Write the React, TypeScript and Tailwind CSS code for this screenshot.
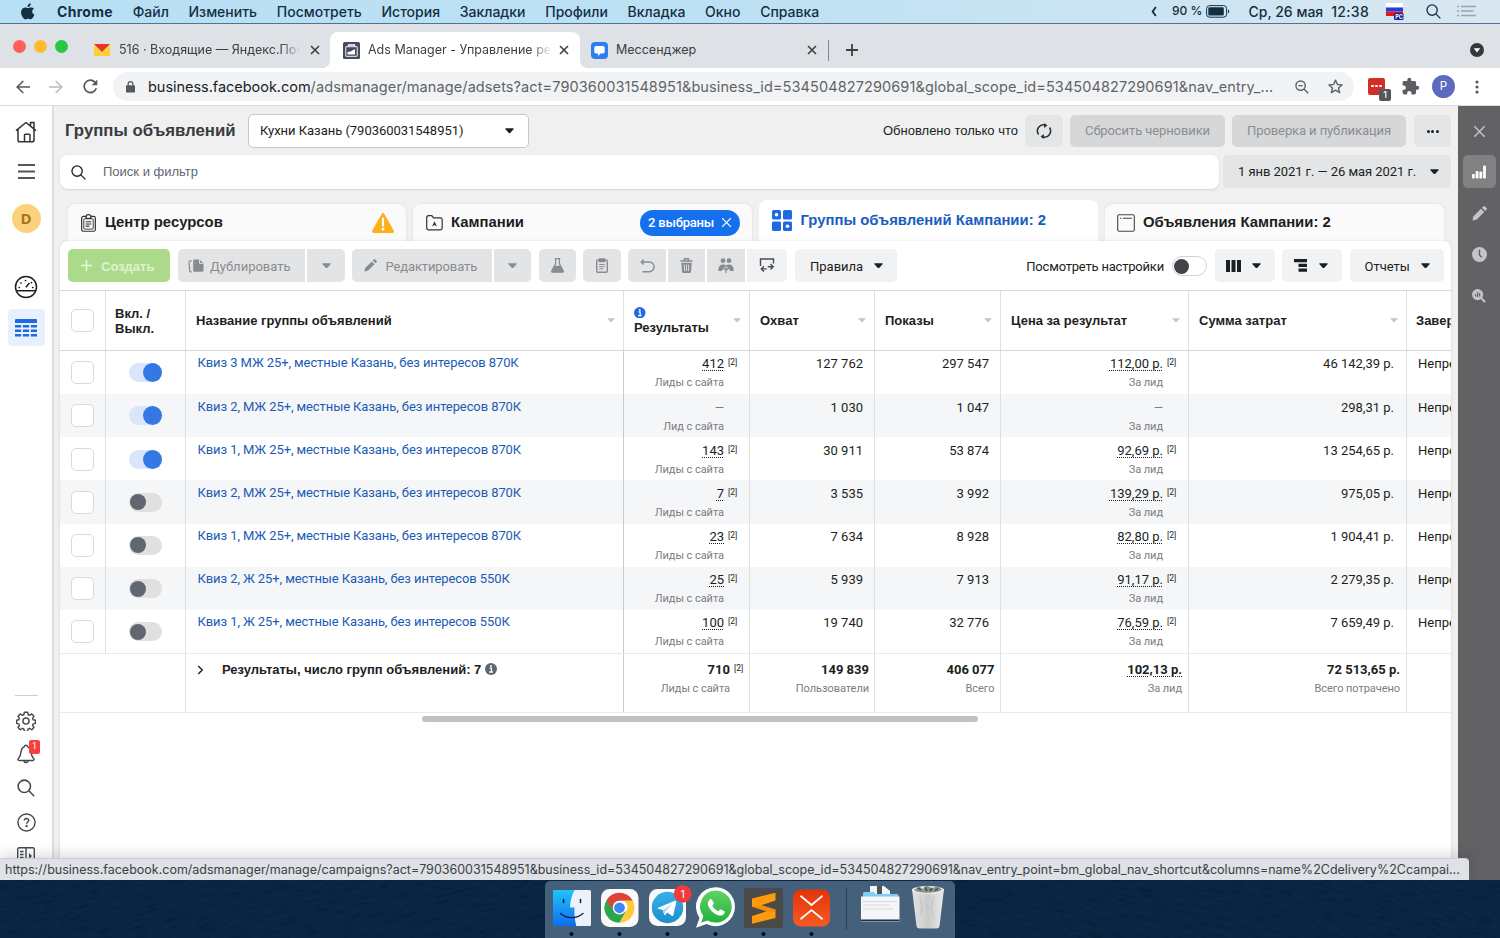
import type { ReactNode } from "react";
import clsx from "clsx";

const INTER = "font-['Inter',sans-serif]";
const ROBOTO = "font-['Roboto',sans-serif]";
const ARIAL = "font-['Liberation_Sans',sans-serif]";

type AdSet = {
  name: string;
  on: boolean;
  results: string | null;
  unit: string;
  reach: string;
  shows: string;
  price: string | null;
  spent: string;
};

const ADSETS: AdSet[] = [
  { name: "Квиз 3 МЖ 25+, местные Казань, без интересов 870К", on: true, results: "412", unit: "Лиды с сайта", reach: "127 762", shows: "297 547", price: "112,00 р.", spent: "46 142,39 р." },
  { name: "Квиз 2, МЖ 25+, местные Казань, без интересов 870К", on: true, results: null, unit: "Лид с сайта", reach: "1 030", shows: "1 047", price: null, spent: "298,31 р." },
  { name: "Квиз 1, МЖ 25+, местные Казань, без интересов 870К", on: true, results: "143", unit: "Лиды с сайта", reach: "30 911", shows: "53 874", price: "92,69 р.", spent: "13 254,65 р." },
  { name: "Квиз 2, МЖ 25+, местные Казань, без интересов 870К", on: false, results: "7", unit: "Лиды с сайта", reach: "3 535", shows: "3 992", price: "139,29 р.", spent: "975,05 р." },
  { name: "Квиз 1, МЖ 25+, местные Казань, без интересов 870К", on: false, results: "23", unit: "Лиды с сайта", reach: "7 634", shows: "8 928", price: "82,80 р.", spent: "1 904,41 р." },
  { name: "Квиз 2, Ж 25+, местные Казань, без интересов 550К", on: false, results: "25", unit: "Лиды с сайта", reach: "5 939", shows: "7 913", price: "91,17 р.", spent: "2 279,35 р." },
  { name: "Квиз 1, Ж 25+, местные Казань, без интересов 550К", on: false, results: "100", unit: "Лиды с сайта", reach: "19 740", shows: "32 776", price: "76,59 р.", spent: "7 659,49 р." },
];

const MENU = ["Файл", "Изменить", "Посмотреть", "История", "Закладки", "Профили", "Вкладка", "Окно", "Справка"];

const GRID = "grid grid-cols-[46px_80px_438px_126px_125px_126px_188px_218px_44px]";

function Caret({ className = "h-[5.500px] w-[9px]" }: { className?: string }) {
  return (
    <svg viewBox="0 0 10 6" className={clsx("shrink-0", className)} fill="currentColor">
      <path d="M1 .2h8c.7 0 1 .7.5 1.200L5.700 5.400a1 1 0 0 1-1.400 0L.5 1.400C0 .9.3.2 1 .2z" />
    </svg>
  );
}

function Close({ className }: { className?: string }) {
  return (
    <svg viewBox="0 0 10 10" className={className} fill="none" stroke="currentColor">
      <path d="M1 1l8 8M9 1l-8 8" />
    </svg>
  );
}

function Magnifier({ className, width = 1.5 }: { className?: string; width?: number }) {
  return (
    <svg viewBox="0 0 16 16" className={className} fill="none" stroke="currentColor" strokeWidth={width}>
      <circle cx="6.500" cy="6.500" r="5.500" />
      <path d="M10.500 10.500L15.300 15.300" />
    </svg>
  );
}

function MenuBar() {
  return (
    <div className={clsx("flex h-[24px] shrink-0 items-center border-b border-[#4d7396] bg-linear-to-r from-[#b9dff5] via-[#bde1f3] to-[#d9e7f0] pb-px text-[14px] font-medium text-[#123042]", INTER)}>
      <svg viewBox="0 0 14 17" className="ml-[21px] h-[17px] w-[14px]" fill="#12303f">
        <path d="M9.800.2c.1 1.100-.3 2-.9 2.700-.6.7-1.500 1.200-2.400 1.100-.1-1 .4-2 .9-2.600C8 .7 9 .3 9.800.2zM12.900 5.800c-1 .6-1.700 1.500-1.700 2.800 0 1.500.9 2.600 2.200 3.100-.3.9-.8 1.800-1.300 2.600-.7 1-1.400 2-2.500 2-1.100 0-1.400-.6-2.600-.6-1.200 0-1.600.6-2.600.7-1.100 0-1.900-1.100-2.600-2.100C.4 12.300-.700 8.800.8 6.500c.8-1.200 2-2 3.400-2 1.100 0 2.100.7 2.700.7.600 0 1.900-.9 3.200-.7 1.100 0 2.100.5 2.800 1.300z" />
      </svg>
      <div className="ml-[22px] flex gap-[19.700px]">
        <span className="font-bold tracking-[.3px]">Chrome</span>
        {MENU.map((item) => (
          <span key={item}>{item}</span>
        ))}
      </div>
      <div className="ml-auto flex items-center">
        <svg viewBox="0 0 6 12" className="h-[11px] w-[6px]" fill="none" stroke="currentColor" strokeWidth="2">
          <path d="M5 1L1.500 6 5 11" />
        </svg>
        <span className="ml-[15px] text-[12px]">90 %</span>
        <svg viewBox="0 0 24 13" className="ml-[4px] h-[13px] w-[24px]">
          <rect x=".6" y=".6" width="20" height="11.600" rx="3" fill="none" stroke="#123042" />
          <rect x="2.300" y="2.300" width="15.500" height="8.200" rx="1.200" fill="#123042" />
          <path d="M22 4.500c1.700.6 1.700 3.200 0 3.800z" fill="#123042" />
        </svg>
        <span className="ml-[18px]">Ср, 26 мая</span>
        <span className="ml-[8px] tracking-[.3px]">12:38</span>
        <svg viewBox="0 0 18 17" className="ml-[17px] h-[17px] w-[18px]">
          <rect width="17" height="4.500" fill="#fff" />
          <rect y="4.500" width="17" height="4" fill="#2040e0" />
          <rect y="8.500" width="17" height="4.500" fill="#e01818" />
          <rect x="8" y="10" width="9.500" height="7" rx="1.500" fill="#10209a" />
          <text x="9.300" y="15.500" fontSize="5.500" fontWeight="700" fill="#fff" fontFamily="Inter">РС</text>
        </svg>
        <Magnifier className="ml-[22px] h-[15px] w-[15px]" width={1.400} />
        <svg viewBox="0 0 19 12" className="mr-[24px] ml-[16px] h-[12px] w-[19px] text-[#93a5b0]" stroke="currentColor" strokeWidth="1.500">
          <path d="M0 1.500h2M0 6h2M0 10.500h2M4 1.500h15M4 6h12.500M4 10.500h15" />
        </svg>
      </div>
    </div>
  );
}

function TabStrip() {
  return (
    <div className={clsx("flex h-[44px] shrink-0 items-end bg-[#dee1e6] text-[12.500px] text-[#3c4043]", INTER)}>
      <div className="flex h-[44px] w-[80px] shrink-0 items-center gap-[8px] pl-[13px]">
        <span className="size-[13px] rounded-full bg-[#ff5f57]" />
        <span className="size-[13px] rounded-full bg-[#febc2e]" />
        <span className="size-[13px] rounded-full bg-[#28c840]" />
      </div>
      <div className="flex h-[36px] w-[250px] items-center pl-[14px]">
        <svg viewBox="0 0 16 12" className="h-[12px] w-[16px]">
          <path d="M0 0h16v12H0z" fill="#ffcc33" />
          <path d="M0 0l8 8 8-8v4L8 12 0 4z" fill="#ffdb4d" opacity=".5" />
          <path d="M0 0h16L8 8z" fill="#e8342a" />
        </svg>
        <div className="ml-[9px] w-[182px] overflow-hidden whitespace-nowrap [mask-image:linear-gradient(to_right,#000_162px,transparent_182px)]">
          516 · Входящие — Яндекс.Почта
        </div>
        <Close className="ml-[9px] size-[10px] stroke-[1.600]" />
      </div>
      <div className="relative flex h-[36px] w-[250px] items-center rounded-t-lg bg-white pl-[13px] before:absolute before:bottom-0 before:-left-2 before:size-2 before:bg-[radial-gradient(circle_at_0_0,transparent_8px,#fff_8px)] after:absolute after:-right-2 after:bottom-0 after:size-2 after:bg-[radial-gradient(circle_at_100%_0,transparent_8px,#fff_8px)]">
        <svg viewBox="0 0 17 17" className="size-[17px]">
          <rect width="17" height="17" rx="1.500" fill="#454a5e" />
          <path d="M5.500 4.500V3h6v1.500" fill="none" stroke="#fff" strokeWidth="1.300" />
          <rect x="2.700" y="4.700" width="11.600" height="9.600" rx="1" fill="none" stroke="#cfd3dc" strokeWidth="1.200" />
          <path d="M4.500 12.500V10l3-.5 4.500-2.500v5.500z" fill="#fff" />
        </svg>
        <div className="ml-[8px] w-[182px] overflow-hidden whitespace-nowrap [mask-image:linear-gradient(to_right,#000_162px,transparent_184px)]">
          Ads Manager - Управление рекламой
        </div>
        <Close className="ml-[9px] size-[10px] stroke-[1.600]" />
      </div>
      <div className="flex h-[36px] w-[249px] items-center pl-[11px]">
        <svg viewBox="0 0 17 17" className="size-[17px]">
          <rect width="17" height="17" rx="4" fill="#2d7ff0" />
          <path d="M5 4h7a1.700 1.700 0 0 1 1.700 1.700v4A1.700 1.700 0 0 1 12 11.400H9.500L7 14v-2.600H5a1.700 1.700 0 0 1-1.700-1.700v-4A1.700 1.700 0 0 1 5 4z" fill="#fff" />
        </svg>
        <span className="ml-[8px]">Мессенджер</span>
        <Close className="ml-auto size-[10px] stroke-[1.600]" />
        <span className="ml-[11px] h-[21px] w-px bg-[#80868b]" />
      </div>
      <svg viewBox="0 0 12 12" className="mb-3 ml-[17px] size-[12px]" stroke="#3c4043" strokeWidth="1.800">
        <path d="M6 0v12M0 6h12" />
      </svg>
      <svg viewBox="0 0 14 14" className="mr-[16px] mb-[11px] ml-auto size-[14px]">
        <circle cx="7" cy="7" r="7" fill="#34373b" />
        <path d="M3.800 5.200h6.400L7 9.600z" fill="#fff" />
      </svg>
    </div>
  );
}

function AddressBar() {
  return (
    <div className={clsx("flex h-[38px] shrink-0 items-center border-b border-[#d9dadc] bg-white", INTER)}>
      <svg viewBox="0 0 14 14" className="ml-[16px] size-[14px]" fill="none" stroke="#55595e" strokeWidth="1.600">
        <path d="M14 7H1.500M7.300 1L1.200 7l6.100 6" />
      </svg>
      <svg viewBox="0 0 14 14" className="ml-[19px] size-[14px]" fill="none" stroke="#b9bbbe" strokeWidth="1.500">
        <path d="M0 7h12.500M6.700 1l6.100 6-6.100 6" />
      </svg>
      <svg viewBox="0 0 15 15" className="ml-[20px] size-[15px]" fill="none" stroke="#55595e" strokeWidth="1.700">
        <path d="M13.300 9.300A6.200 6.200 0 1 1 12 3.200L13.500 5" />
        <path d="M14.300.5v5.700H8.700z" fill="#55595e" stroke="none" />
      </svg>
      <div className="ml-[15px] flex h-[29px] w-[1241px] items-center rounded-full bg-[#f1f3f4] pl-[13px]">
        <svg viewBox="0 0 10 13" className="h-[12px] w-[9px]">
          <rect y="4.500" width="10" height="8.200" rx="1" fill="#55595e" />
          <path d="M2.400 5V3.200a2.600 2.600 0 0 1 5.200 0V5" fill="none" stroke="#55595e" strokeWidth="1.400" />
        </svg>
        <span className="ml-[13px] text-[14.500px] tracking-[-.03px] whitespace-nowrap text-[#202124]">business.facebook.com</span>
        <span className="text-[14.500px] tracking-[.1px] whitespace-nowrap text-[#5f6368]">/adsmanager/manage/adsets?act=790360031548951&amp;business_id=534504827290691&amp;global_scope_id=534504827290691&amp;nav_entry_...</span>
        <svg viewBox="0 0 15 15" className="mr-[19px] ml-auto size-[14px] shrink-0" fill="none" stroke="#5f6368" strokeWidth="1.500">
          <circle cx="6" cy="6" r="5" />
          <path d="M9.800 9.800l4.500 4.500M3.700 6h4.600" />
        </svg>
        <svg viewBox="0 0 16 16" className="mr-[11px] size-[15px] shrink-0" fill="none" stroke="#5f6368" strokeWidth="1.500" strokeLinejoin="round">
          <path d="M8 1.200l2 4.700 5 .4-3.800 3.300 1.200 5L8 11.900l-4.400 2.700 1.200-5L1 6.300l5-.4z" />
        </svg>
      </div>
      <div className="relative ml-[14px] h-[17px] w-[17px] rounded-[2px] bg-[#d32d27]">
        <div className="flex h-[16px] items-center justify-center gap-[1.500px]">
          <span className="size-[2.500px] rounded-full bg-white" />
          <span className="size-[2.500px] rounded-full bg-white" />
          <span className="size-[2.500px] rounded-full bg-white" />
        </div>
        <span className="absolute top-[11px] left-[11px] flex h-[12px] w-[12px] items-center justify-center rounded-[2px] bg-[#54575b] text-[9px] font-medium text-white">1</span>
      </div>
      <svg viewBox="0 0 24 24" className="ml-[16px] size-[19px]" fill="#5b5f64">
        <path d="M20.500 11H19V7c0-1.100-.9-2-2-2h-4V3.500a2.500 2.500 0 0 0-5 0V5H4c-1.100 0-2 .9-2 2v3.800h1.500c1.500 0 2.700 1.200 2.700 2.700S5 16.200 3.500 16.200H2V20c0 1.100.9 2 2 2h3.800v-1.500c0-1.500 1.200-2.700 2.700-2.700s2.700 1.200 2.700 2.700V22H17c1.100 0 2-.9 2-2v-4h1.500a2.500 2.500 0 0 0 0-5z" />
      </svg>
      <span className="ml-[12px] flex size-[23px] items-center justify-center rounded-full bg-[#5c6bc0] text-[11.500px] text-white">P</span>
      <svg viewBox="0 0 4 14" className="ml-[20px] h-[14px] w-[4px]" fill="#55595e">
        <circle cx="2" cy="2" r="1.600" />
        <circle cx="2" cy="7" r="1.600" />
        <circle cx="2" cy="12" r="1.600" />
      </svg>
    </div>
  );
}

function LeftNav() {
  return (
    <nav className="flex w-[54px] shrink-0 flex-col items-center border-r-2 border-[#dfdfe1] bg-white text-[#444950]">
      <svg viewBox="0 0 22 22" className="mt-[15px] size-[22px] shrink-0" fill="none" stroke="#333" strokeWidth="1.500" strokeLinejoin="round">
        <path d="M1 9.700L11 1.500l10 8.200M3 8.500V19a1.800 1.800 0 0 0 1.800 1.800h12.400A1.800 1.800 0 0 0 19 19V8.500M15.500 4.500V1.500H19v6M9.500 20.500v-6.500a.8.800 0 0 1 .8-.8h3.900a.8.800 0 0 1 .8.800v6.500" />
      </svg>
      <svg viewBox="0 0 17 15" className="mt-[21px] h-[15px] w-[17px] shrink-0" stroke="#555" strokeWidth="1.800">
        <path d="M0 1h17M0 7.500h17M0 14h17" />
      </svg>
      <div className="mt-[25px] flex size-[29px] shrink-0 items-center justify-center rounded-full bg-[#fbd27c] font-['Open_Sans',sans-serif] text-[15px] font-bold text-[#a8741a]">D</div>
      <svg viewBox="0 0 24 24" className="mt-[42px] size-[24px] shrink-0" fill="none" stroke="#1c1e21" strokeWidth="1.500">
        <circle cx="12" cy="12" r="10.500" />
        <path d="M2 15.800h20M11.800 12.200l3.700-4.300" />
        <path d="M5.200 12.500h.1M7 8h.1M11.500 5.500h.1M18.700 12.500h.1M17.400 7.600h.1" strokeWidth="1.700" strokeLinecap="round" />
      </svg>
      <div className="mt-[10px] flex h-[37px] w-[37px] shrink-0 items-center justify-center rounded-[4px] bg-[#e7f0fd]">
        <svg viewBox="0 0 22 18" className="h-[18px] w-[22px]" fill="#1f6ae0">
          <path d="M0 1a1 1 0 0 1 1-1h20a1 1 0 0 1 1 1v3H0z" />
          <path d="M0 6h6.200v2.500H0zM7.900 6h6.200v2.500H7.900zM15.800 6H22v2.500h-6.200zM0 10.500h6.200V13H0zM7.900 10.500h6.200V13H7.900zM15.800 10.500H22V13h-6.200zM0 15h6.200v2.500H0zM7.900 15h6.200v2.500H7.900zM15.800 15H22v2.500h-6.200z" />
        </svg>
      </div>
      <div className="mt-[349px] h-px w-[23px] shrink-0 bg-[#ccd0d5]" />
      <svg viewBox="0 0 24 24" className="mt-[15px] size-[20px] shrink-0" fill="none" stroke="currentColor" strokeWidth="1.700" strokeLinejoin="round">
        <circle cx="12" cy="12" r="3.700" />
        <path d="M10 1.500h4l.6 3 1.700.7 2.600-1.700 2.700 2.700-1.700 2.600.7 1.700 2.700.6v3.800l-2.700.6-.7 1.700 1.700 2.600-2.700 2.700-2.600-1.700-1.700.7-.6 3h-4l-.6-3-1.700-.7-2.600 1.700-2.700-2.700 1.700-2.600-.7-1.700-2.700-.6v-3.800l2.700-.6.700-1.700-1.700-2.600 2.700-2.700 2.600 1.700 1.700-.7z" />
      </svg>
      <div className="relative mt-[13px] shrink-0">
        <svg viewBox="0 0 18 20" className="h-[20px] w-[18px]" fill="none" stroke="currentColor" strokeWidth="1.400" strokeLinejoin="round">
          <path d="M9 1.200c1 0 1.600.7 1.800 1.600 2 .8 3 2.500 3.200 5 .2 3.500.8 5 2.600 6.700.9.900.4 2-.7 2H2.100c-1.100 0-1.600-1.100-.7-2C3.200 12.800 3.800 11.300 4 7.800c.2-2.500 1.200-4.200 3.200-5C7.400 1.900 8 1.200 9 1.200zM6.700 16.800a2.400 2.400 0 0 0 4.600 0" />
        </svg>
        <span className={clsx("absolute -top-[4px] left-[12px] flex h-[14px] w-[11px] items-center justify-center rounded-[2px] bg-[#fa3e3e] text-[9px] text-white", ROBOTO)}>1</span>
      </div>
      <Magnifier className="mt-[15px] size-[18px] shrink-0" width={1.400} />
      <svg viewBox="0 0 20 20" className="mt-[16px] size-[19px] shrink-0" fill="none" stroke="currentColor" strokeWidth="1.500">
        <circle cx="10" cy="10" r="9" />
        <path d="M7.700 8c0-1.400 1-2.200 2.300-2.200s2.300.8 2.300 2c0 1.700-2.200 1.700-2.200 3.600" />
        <circle cx="10.100" cy="13.700" r=".5" fill="currentColor" />
      </svg>
      <svg viewBox="0 0 18 18" className="mt-[15px] size-[18px] shrink-0" fill="none" stroke="currentColor" strokeWidth="1.400">
        <rect x=".7" y=".7" width="16.600" height="16.600" rx="1.500" />
        <path d="M9 1v16M3 4.500h3.500M3 7.500h3.500M3 10.500h3.500" />
        <path d="M12 6v6l3-3z" fill="currentColor" stroke="none" />
      </svg>
    </nav>
  );
}

function RightRail() {
  return (
    <aside className="flex w-[42px] shrink-0 flex-col items-center bg-[#626264] text-[#c3c5c8]">
      <Close className="mt-[19px] size-[13px] shrink-0 stroke-[1.100]" />
      <div className="mt-[17px] flex h-[33px] w-[33px] shrink-0 items-center justify-center rounded-[5px] bg-[#818183]">
        <svg viewBox="0 0 14 14" className="size-[14px]" fill="#fff">
          <rect y="9" width="2.800" height="4.500" rx="1" />
          <rect x="3.700" y="6" width="2.800" height="7.500" rx="1" />
          <rect x="7.400" y="6.500" width="2.800" height="7" rx="1" />
          <rect x="11.100" y=".5" width="2.800" height="13" rx="1" />
        </svg>
      </div>
      <svg viewBox="0 0 15 15" className="mt-[18px] size-[15px] shrink-0" fill="currentColor">
        <path d="M.5 14.500l.8-4L9 2.800l3.200 3.200-7.700 7.700zM10 1.800L11.300.5a1.200 1.200 0 0 1 1.700 0L14.500 2a1.200 1.200 0 0 1 0 1.700L13.200 5z" />
      </svg>
      <svg viewBox="0 0 16 16" className="mt-[26px] size-[15px] shrink-0">
        <circle cx="8" cy="8" r="8" fill="currentColor" />
        <path d="M8 3v5.500l2.500 2.500" stroke="#626264" strokeWidth="1.500" fill="none" />
      </svg>
      <svg viewBox="0 0 15 15" className="mt-[27px] size-[14px] shrink-0">
        <circle cx="6" cy="6" r="6" fill="currentColor" />
        <path d="M10 10l4 4" stroke="currentColor" strokeWidth="2.200" />
        <path d="M3.800 8V5.500M6 8.500v-5M8.200 8V4.500" stroke="#626264" strokeWidth="1.300" />
      </svg>
    </aside>
  );
}

function PageHeader() {
  return (
    <div className="flex h-[48px] shrink-0 items-center pt-[2px] pr-[7px] pl-[11px]">
      <h1 className="w-[183px] text-[16.800px] font-bold whitespace-nowrap text-[#3a3b3d]">Группы объявлений</h1>
      <div className={clsx("flex h-[34px] w-[281px] items-center justify-between rounded-[5px] border border-[#c6c8cb] bg-white pr-[14px] pl-[11px] text-[13px] tracking-[-.03px] text-[#1c1e21]", ROBOTO)}>
        <span>Кухни Казань (790360031548951)</span>
        <Caret />
      </div>
      <span className="ml-auto text-[13px] text-[#1c1e21]">Обновлено только что</span>
      <div className="ml-[7px] flex h-[32px] w-[38px] items-center justify-center rounded-[5px] bg-[#e4e5e7]">
        <svg viewBox="0 0 16 16" className="size-[16px]" fill="none" stroke="#2b2d30" strokeWidth="1.500">
          <path d="M2.600 11.500A6.200 6.200 0 0 1 9.500 2M13.400 4.500A6.200 6.200 0 0 1 6.500 14" />
          <path d="M8.200 0l3.300 2.500L8.200 5zM7.800 11L4.500 13.500 7.800 16z" fill="#2b2d30" stroke="none" />
        </svg>
      </div>
      <div className={clsx("ml-[7px] flex h-[32px] w-[155px] items-center justify-center rounded-[5px] bg-[#d6d7d8] text-[13px] tracking-[-.1px] text-[#8a8d91]", ROBOTO)}>
        Сбросить черновики
      </div>
      <div className={clsx("ml-[7px] flex h-[32px] w-[174px] items-center justify-center rounded-[5px] bg-[#d6d7d8] text-[13px] tracking-[-.1px] text-[#8a8d91]", ROBOTO)}>
        Проверка и публикация
      </div>
      <div className="ml-[8px] flex h-[32px] w-[37px] items-center justify-center gap-[1.500px] rounded-[5px] bg-[#e4e5e7]">
        <span className="size-[3px] rounded-full bg-[#1c1e21]" />
        <span className="size-[3px] rounded-full bg-[#1c1e21]" />
        <span className="size-[3px] rounded-full bg-[#1c1e21]" />
      </div>
    </div>
  );
}

function SearchRow() {
  return (
    <div className="mt-px flex shrink-0 gap-[4px] pr-[7px] pl-[6px]">
      <div className="flex h-[34px] w-[1159px] items-center rounded-lg bg-white pl-[11px] shadow-[0_1px_2px_rgba(0,0,0,0.12)]">
        <Magnifier className="size-[15px] text-[#1c1e21]" width={1.400} />
        <span className="ml-[17px] text-[13px] text-[#606770]">Поиск и фильтр</span>
      </div>
      <div className={clsx("flex h-[33px] w-[228px] items-center justify-between rounded-[5px] bg-[#e4e5e7] pr-[12px] pl-[15px] text-[13px] tracking-[-.06px] text-[#1c1e21]", ROBOTO)}>
        <span>1 янв 2021 г. — 26 мая 2021 г.</span>
        <Caret />
      </div>
    </div>
  );
}

function LevelTabs() {
  return (
    <div className="mt-[11px] flex h-[41px] shrink-0 items-end gap-[7px] pl-[14px] text-[14.870px] font-bold text-[#1c1e21]">
      <div className="flex h-[37px] w-[338px] items-center rounded-t-lg bg-[#fafafb] pl-[13px] shadow-[0_0_3px_rgba(0,0,0,0.08)]">
        <svg viewBox="0 0 16 19" className="h-[18px] w-[15px]" fill="none" stroke="#333" strokeWidth="1.300">
          <rect x=".7" y="2.500" width="14.600" height="15.800" rx="2" />
          <rect x="3" y="5" width="10" height="11" rx=".8" strokeWidth="1" />
          <path d="M5.500 4.500v-2a2.500 2 0 0 1 5 0v2z" fill="#fff" />
          <path d="M5 8.200h6M5 10.500h6M5 12.800h4" strokeWidth="1.200" />
        </svg>
        <span className="ml-[9px]">Центр ресурсов</span>
        <svg viewBox="0 0 22 20" className="mr-[12px] ml-auto h-[20px] w-[22px]">
          <path d="M9.600.9a1.600 1.600 0 0 1 2.800 0l9.300 16.600A1.600 1.600 0 0 1 20.300 20H1.700A1.600 1.600 0 0 1 .3 17.500z" fill="#fbb11b" />
          <path d="M11 5.700v7" stroke="#fff" strokeWidth="2.200" strokeLinecap="round" />
          <circle cx="11" cy="16.200" r="1.400" fill="#fff" />
        </svg>
      </div>
      <div className="flex h-[37px] w-[339px] items-center rounded-t-lg bg-[#fafafb] pl-[13px] shadow-[0_0_3px_rgba(0,0,0,0.08)]">
        <svg viewBox="0 0 17 16" className="h-[16px] w-[17px]" fill="none" stroke="#333" strokeWidth="1.200">
          <path d="M.7 13V2.500A1.800 1.800 0 0 1 2.500.700h2.700c.6 0 1 .2 1.300.7l.9 1.500h7a1.800 1.800 0 0 1 1.800 1.800V13a1.800 1.800 0 0 1-1.800 1.800h-12A1.800 1.800 0 0 1 .7 13z" />
          <path d="M6 11.500L8.500 6.300l2.500 5.200-2.500-1.400z" fill="#333" stroke="none" />
        </svg>
        <span className="ml-[8px]">Кампании</span>
        <div className={clsx("mr-[12px] ml-auto flex h-[26px] w-[100px] items-center justify-between rounded-full bg-[#1570ee] pr-[8px] pl-[8px] text-[13px] font-medium tracking-[-.2px] text-white", ROBOTO)}>
          <span>2 выбраны</span>
          <Close className="size-[11px] stroke-[1.200]" />
        </div>
      </div>
      <div className="flex h-[41px] w-[339px] items-center rounded-t-lg bg-white pl-[13px] text-[#1a5dc0]">
        <svg viewBox="0 0 20 21" className="h-[21px] w-[20px]" fill="#1f6ae0">
          <rect width="9" height="9.500" rx="1.500" />
          <rect x="11" width="9" height="9.500" rx="1.500" />
          <rect y="11.500" width="9" height="9.500" rx="1.500" />
          <rect x="11" y="11.500" width="9" height="9.500" rx="1.500" />
          <circle cx="4.500" cy="4.700" r="1.800" fill="#fff" />
          <circle cx="15.500" cy="16.200" r="1.800" fill="#fff" />
        </svg>
        <span className="ml-[8.500px]">Группы объявлений Кампании: 2</span>
      </div>
      <div className="flex h-[37px] w-[339px] items-center rounded-t-lg bg-[#fafafb] pl-[12px] shadow-[0_0_3px_rgba(0,0,0,0.08)]">
        <svg viewBox="0 0 18 18" className="size-[18px]" fill="none" stroke="#444" strokeWidth="1.100">
          <rect x=".7" y=".7" width="16.600" height="16.600" rx="1.500" />
          <path d="M3 4.200h1.500M6 4.200h9" />
        </svg>
        <span className="ml-[8px]">Объявления Кампании: 2</span>
      </div>
    </div>
  );
}

function ToolButton({ className, children }: { className?: string; children: ReactNode }) {
  return <div className={clsx("flex h-[33px] shrink-0 items-center bg-[#e3e4e5] text-[#8a8b8e]", className)}>{children}</div>;
}

function Toolbar() {
  return (
    <div className={clsx("flex h-[49px] items-start pt-[8px] pr-[7px] pl-[8px] text-[13px] text-[#8a8d91]", ROBOTO)}>
      <div className={clsx("flex h-[33px] w-[102px] items-center rounded-[5px] bg-[#abdb8a] pl-[13px] font-bold text-[#ddf2cf]", ARIAL)}>
        <svg viewBox="0 0 11 11" className="size-[11px]" stroke="#e9f7e0" strokeWidth="1.600">
          <path d="M5.500 0v11M0 5.500h11" />
        </svg>
        <span className="ml-[9px] pt-[2px]">Создать</span>
      </div>
      <ToolButton className="ml-[8px] w-[127px] rounded-l-[5px] pl-[10px]">
        <svg viewBox="0 0 17 14" className="h-[14px] w-[16px]" fill="currentColor">
          <path d="M7 0h5l4.500 4v7.500A1.500 1.500 0 0 1 15 13H7a1.500 1.500 0 0 1-1.500-1.500v-10A1.500 1.500 0 0 1 7 0z" />
          <path d="M12.200 0v4.200h4.300" stroke="#e3e4e5" fill="none" />
          <path d="M4 1.500H2.500C1.500 1.500 1 2 1.100 3l.7 9c.1 1 .7 1.500 1.700 1.300H4" fill="none" stroke="currentColor" strokeWidth="1.300" />
        </svg>
        <span className="ml-[6px] pt-[2px]">Дублировать</span>
      </ToolButton>
      <ToolButton className="ml-[2px] w-[38px] justify-center rounded-r-[5px]"><Caret /></ToolButton>
      <ToolButton className="ml-[7px] w-[140px] rounded-l-[5px] pl-[12px]">
        <svg viewBox="0 0 15 15" className="size-[13px]" fill="currentColor">
          <path d="M.5 14.500l.8-4L9 2.800l3.200 3.200-7.700 7.700zM10 1.800L11.300.5a1.200 1.200 0 0 1 1.700 0L14.500 2a1.200 1.200 0 0 1 0 1.700L13.200 5z" />
        </svg>
        <span className="ml-[8.500px] pt-[2px] tracking-[-.12px]">Редактировать</span>
      </ToolButton>
      <ToolButton className="ml-[2px] w-[37px] justify-center rounded-r-[5px]"><Caret /></ToolButton>
      <ToolButton className="ml-[8px] w-[37px] justify-center rounded-[5px]">
        <svg viewBox="0 0 14 16" className="h-[15px] w-[13px]" fill="none" stroke="currentColor" strokeWidth="1.300">
          <path d="M4 .7h6M5 1v5L1 13.300c-.5 1 0 1.900 1 1.900h10c1 0 1.500-.9 1-1.900L9 6V1" />
          <path d="M4.200 9h5.600l3 5.500H1.200z" fill="currentColor" />
        </svg>
      </ToolButton>
      <ToolButton className="ml-[7px] w-[38px] justify-center rounded-[5px]">
        <svg viewBox="0 0 12 15" className="h-[15px] w-[12px]" fill="none" stroke="currentColor" strokeWidth="1.400">
          <rect x=".7" y="2" width="10.600" height="12.300" rx="1.200" />
          <path d="M3.500 1h5v2.500h-5z" fill="currentColor" />
          <path d="M3.200 6.500h5.600M3.200 8.700h5.600M3.200 10.900H7" strokeWidth="1" />
        </svg>
      </ToolButton>
      <ToolButton className="ml-[7px] w-[38px] justify-center rounded-l-[5px]">
        <svg viewBox="0 0 15 14" className="h-[14px] w-[15px]" fill="none" stroke="currentColor" strokeWidth="1.400">
          <path d="M3.700.5L1.200 3l2.500 2.500M1.500 3h7.800a4.800 4.800 0 0 1 0 9.700H2.500" />
        </svg>
      </ToolButton>
      <ToolButton className="ml-[2px] w-[37px] justify-center">
        <svg viewBox="0 0 13 15" className="h-[15px] w-[13px]">
          <path d="M.5 3h12M4.500 2.500V.8h4v1.700" stroke="currentColor" strokeWidth="1.500" fill="none" />
          <path d="M1.300 4.700h10.400l-.7 9.100c0 .7-.5 1.200-1.200 1.200H3.200c-.7 0-1.200-.5-1.200-1.200z" fill="currentColor" />
          <path d="M4.300 6.500l.2 6.500M6.500 6.500V13M8.700 6.500L8.500 13" stroke="#e3e4e5" strokeWidth=".9" />
        </svg>
      </ToolButton>
      <ToolButton className="ml-[2px] w-[38px] justify-center">
        <svg viewBox="0 0 16 15" className="h-[15px] w-[16px]" fill="currentColor">
          <circle cx="5" cy="2.700" r="2.400" />
          <circle cx="11" cy="2.700" r="2.400" />
          <path d="M.3 12c0-3.500 1.700-5.500 4.700-5.500 1.300 0 2.200.3 3 1 .8-.7 1.700-1 3-1 3 0 4.700 2 4.700 5.500 0 .7-.4 1-1 1h-2.200L8 7.900 3.500 13H1.300c-.6 0-1-.3-1-1z" />
          <path d="M8 10v5M6 12l2-2.200 2 2.200" stroke="currentColor" strokeWidth="1.200" fill="none" />
        </svg>
      </ToolButton>
      <div className="ml-[2px] flex h-[33px] w-[40px] items-center justify-center rounded-r-[5px] bg-[#f1f2f3] text-[#4b4d51]">
        <svg viewBox="0 0 16 15" className="h-[15px] w-[16px]" fill="none" stroke="currentColor" strokeWidth="1.400">
          <path d="M1.500 8V1h13v4.500" />
          <path d="M5 8.200l-2.700 2.700L5 13.600M2.600 10.900h5.200M11.500 6l2.700 2.700-2.700 2.700M13.900 8.700H8.700" />
        </svg>
      </div>
      <div className="ml-[8px] flex h-[33px] w-[102px] items-center justify-between rounded-[5px] bg-[#f1f2f3] pr-[14px] pl-[15px] text-[#1c1e21]">
        <span className="pt-[2px]">Правила</span>
        <Caret />
      </div>
      <span className="ml-auto pt-px tracking-[-.2px] leading-[34px] text-[#1c1e21]">Посмотреть настройки</span>
      <div className="mt-[7px] ml-[8px] flex h-[20px] w-[35px] items-center rounded-full border border-[#d0d2d5] bg-white pl-px">
        <span className="size-[15px] rounded-full bg-[#414347]" />
      </div>
      <div className="ml-[8px] flex h-[33px] w-[60px] items-center justify-center gap-[11px] rounded-[5px] bg-[#f1f2f3] pr-[4px] text-[#1c1e21]">
        <svg viewBox="0 0 15 12" className="h-[12px] w-[15px]" fill="currentColor"><path d="M0 0h4v12H0zM5.500 0h4v12h-4zM11 0h4v12h-4z" /></svg>
        <Caret />
      </div>
      <div className="ml-[7px] flex h-[33px] w-[60px] items-center justify-center gap-[11px] rounded-[5px] bg-[#f1f2f3] pr-[2px] text-[#1c1e21]">
        <svg viewBox="0 0 14 13" className="h-[13px] w-[14px]" fill="currentColor"><path d="M0 0h13v3.200H0zM4.500 4.800H13V8H4.500zM4.500 9.600H13v3.200H4.500z" /></svg>
        <Caret />
      </div>
      <div className="ml-[8px] flex h-[33px] w-[94px] items-center justify-between rounded-[5px] bg-[#f1f2f3] pr-[14px] pl-[14.500px] text-[#1c1e21]">
        <span className="pt-[2px]">Отчеты</span>
        <Caret />
      </div>
    </div>
  );
}

function Checkbox() {
  return <div className="size-[23px] rounded-[5px] border border-[#d8dadd] bg-white" />;
}

function InfoDot({ className }: { className?: string }) {
  return (
    <svg viewBox="0 0 12 12" className={className}>
      <circle cx="6" cy="6" r="6" fill="currentColor" />
      <path d="M4.700 5.200h1.700V9M4.300 9h3.600" stroke="#fff" strokeWidth="1.300" fill="none" />
      <circle cx="6" cy="3" r="1" fill="#fff" />
    </svg>
  );
}

function HeadCell({ label, info = false }: { label: string; info?: boolean }) {
  return (
    <div className="flex items-center justify-between overflow-hidden border-r border-[#dfe0e2] pr-[8.500px] pl-[10px] whitespace-nowrap">
      <div className={clsx(info && "pt-[2px]")}>
        {info && <InfoDot className="mb-[2px] size-[11.500px] text-[#1f6ae0]" />}
        <span className="block leading-[16px]">{label}</span>
      </div>
      <Caret className="h-[4.500px] w-[8px] text-[#c3c5c8]" />
    </div>
  );
}

function ValueCell({ value, sub, noted, dotted, className }: { value: string | null; sub?: string; noted?: boolean; dotted?: boolean; className?: string }) {
  return (
    <div className={clsx("flex flex-col items-end border-r border-[#dfe0e2]", className)}>
      {value === null ? (
        <span className="text-[12px] leading-[16px] text-[#7a7d82]">—</span>
      ) : (
        <span className="relative leading-[16px]">
          <span className={clsx(dotted && "underline decoration-dotted decoration-1 underline-offset-[2px]")}>{value}</span>
          {noted && <span className="absolute -top-[2px] left-full ml-[4px] text-[8.500px] font-normal text-[#1c1e21]">[2]</span>}
        </span>
      )}
      {sub && <span className="mt-[3px] text-[11px] leading-[16px] font-normal tracking-[-.05px] whitespace-nowrap text-[#7a7d82]">{sub}</span>}
    </div>
  );
}

function AdSetTable() {
  return (
    <div className={clsx("w-[1391px] overflow-hidden text-[13px] text-[#1c1e21]", ROBOTO)}>
      <div className={clsx(GRID, "h-[61px] border-y border-[#d5d6d9] font-bold", ARIAL)}>
        <div className="flex items-center justify-center border-r border-[#dfe0e2]"><Checkbox /></div>
        <div className="border-r border-[#dfe0e2] pt-[15px] pl-[9px] leading-[15px]">
          Вкл. /
          <br />
          Выкл.
        </div>
        <HeadCell label="Название группы объявлений" />
        <HeadCell label="Результаты" info />
        <HeadCell label="Охват" />
        <HeadCell label="Показы" />
        <HeadCell label="Цена за результат" />
        <HeadCell label="Сумма затрат" />
        <div className="flex items-center overflow-hidden pl-[9px]">Завершение</div>
      </div>
      {ADSETS.map((row, i) => (
        <div key={i} className={clsx(GRID, "h-[43.150px]", i % 2 === 1 && "bg-[#f5f6f7]")}>
          <div className="flex items-center justify-center border-r border-[#dfe0e2] pt-[.500px]"><Checkbox /></div>
          <div className="flex items-center justify-center border-r border-[#dfe0e2] pt-[.500px]">
            {row.on ? (
              <div className="flex h-[19px] w-[33px] justify-end rounded-full bg-[#d9e6f9]"><span className="size-[19px] rounded-full bg-[#3578e5]" /></div>
            ) : (
              <div className="flex h-[19px] w-[33px] items-center rounded-full bg-[#e0e0e0] pl-[.5px]"><span className="size-[16px] rounded-full bg-[#606770]" /></div>
            )}
          </div>
          <div className="border-r border-[#c9cacc] pt-[4.400px] pl-[11.500px] leading-[16px] tracking-[-.09px] text-[#1b5bb5]">{row.name}</div>
          <ValueCell value={row.results} sub={row.unit} noted dotted className="pt-[5.400px] pr-[25px]" />
          <ValueCell value={row.reach} className="pt-[5.400px] pr-[11px]" />
          <ValueCell value={row.shows} className="pt-[5.400px] pr-[11px]" />
          <ValueCell value={row.price} sub="За лид" noted dotted className="pt-[5.400px] pr-[25px]" />
          <ValueCell value={row.spent} className="pt-[5.400px] pr-[12px]" />
          <div className="overflow-hidden pt-[5.400px] pl-[11px] leading-[16px] whitespace-nowrap">Непрерывно</div>
        </div>
      ))}
      <div className="grid h-[60px] grid-cols-[126px_438px_126px_125px_126px_188px_218px_44px] border-y border-[#e9eaeb] font-bold">
        <div className="border-r border-[#dfe0e2]" />
        <div className="flex items-start border-r border-[#c9cacc] pt-[8px] pl-[11px]">
          <svg viewBox="0 0 7 11" className="mt-[3px] h-[10px] w-[7px]" fill="none" stroke="#1c1e21" strokeWidth="1.500"><path d="M1 1l4.500 4.500L1 10" /></svg>
          <span className={clsx("ml-[18px] leading-[16px]", ARIAL)}>Результаты, число групп объявлений: 7</span>
          <InfoDot className="mt-[1.500px] ml-[4px] size-[12px] text-[#606770]" />
        </div>
        <ValueCell value="710" sub="Лиды с сайта" noted className="pt-[8px] pr-[19px]" />
        <ValueCell value="149 839" sub="Пользователи" className="pt-[8px] pr-[5px]" />
        <ValueCell value="406 077" sub="Всего" className="pt-[8px] pr-[5.500px]" />
        <ValueCell value="102,13 р." sub="За лид" dotted className="pt-[8px] pr-[6px]" />
        <ValueCell value="72 513,65 р." sub="Всего потрачено" className="pt-[8px] pr-[6px]" />
        <div />
      </div>
      <div className="mt-[3px] ml-[362px] h-[6px] w-[556px] rounded-full bg-[#c1c1c1]" />
    </div>
  );
}

function DockIcons() {
  return (
    <svg viewBox="545 881 410 57" className="h-[57px] w-[410px]">
      <defs>
        <linearGradient id="finder" x1="0" y1="0" x2="0" y2="1"><stop offset="0" stopColor="#20c4fb" /><stop offset="1" stopColor="#0e6df0" /></linearGradient>
        <linearGradient id="tg" x1="0" y1="0" x2="0" y2="1"><stop offset="0" stopColor="#38aee6" /><stop offset="1" stopColor="#1c8fcf" /></linearGradient>
        <linearGradient id="wa" x1="0" y1="0" x2="0" y2="1"><stop offset="0" stopColor="#5fd366" /><stop offset="1" stopColor="#24b23c" /></linearGradient>
        <linearGradient id="xm" x1="0" y1="0" x2="0" y2="1"><stop offset="0" stopColor="#e3330b" /><stop offset="1" stopColor="#f85a22" /></linearGradient>
        <linearGradient id="bin" x1="0" y1="0" x2="1" y2="0"><stop offset="0" stopColor="#e2e2e2" /><stop offset=".5" stopColor="#cbcbcb" /><stop offset="1" stopColor="#ebebeb" /></linearGradient>
      </defs>
      {/* Finder */}
      <rect x="553" y="890" width="38" height="36" rx="1.500" fill="#eef1f8" />
      <path d="M553 890h21.500c-3 6-4.500 12-4.500 17.500h4.500c-.3 6 .2 12 1.800 18.500H553z" fill="url(#finder)" />
      <path d="M563.500 899.500v3M580.500 899.500v3" stroke="#0b1e3c" strokeWidth="1.500" strokeLinecap="round" />
      <path d="M560.500 913.500c6.500 5.500 16 5.500 22.500 0" fill="none" stroke="#0b1e3c" strokeWidth="1.300" strokeLinecap="round" />
      {/* Chrome */}
      <rect x="601" y="889" width="37.500" height="38" rx="8.500" fill="#fafafa" />
      <path d="M619.500 907.800v15A15 15 0 0 1 606.500 900.300z" fill="#2ea44f" />
      <path d="M619.500 907.800l-6.500 3.800 6.500 11.200 6.300-11z" fill="#2ea44f" />
      <path d="M606.500 900.300a15 15 0 0 1 26 0l.3.500h-13.300a7 7 0 0 0-6.500 9.500z" fill="#db4437" />
      <path d="M632.800 900.800a15 15 0 0 1-13.300 22l6.300-11a7 7 0 0 0-2.300-11z" fill="#fbcb3c" />
      <circle cx="619.500" cy="907.800" r="6.800" fill="#fff" />
      <circle cx="619.500" cy="907.800" r="5.400" fill="#4285f4" />
      {/* Telegram */}
      <rect x="649" y="889" width="37" height="37" rx="8.500" fill="#fafafa" />
      <circle cx="667.500" cy="907.500" r="15.700" fill="url(#tg)" />
      <path d="M658 907.800l17-7c.9-.4 1.500.2 1.300 1.200l-2.900 13c-.2 1-.9 1.200-1.700.7l-4.300-3.200-2.200 2.200c-.5.500-1.100.4-1.200-.4l-1.200-4.300-4.600-1.200c-.9-.2-.9-.7-.2-1z" fill="#fff" />
      <path d="M663 910.300l9.500-6.800-7.300 8.200-.4 3z" fill="#a9d4ec" />
      <circle cx="682.700" cy="893.800" r="8.900" fill="#f03a3e" />
      <text x="682.600" y="897.600" textAnchor="middle" fontSize="10.500" fill="#fff" fontFamily="Inter">1</text>
      {/* WhatsApp */}
      <path d="M716 887.200a19.500 19.500 0 1 1-9.500 36.800l-10.500 3.700 3.500-9.800a19.500 19.500 0 0 1 16.500-30.700z" fill="#fff" />
      <path d="M716 890.600a16 16 0 1 1-8.300 29.800l-6.500 2.200 2.200-6.300A16 16 0 0 1 716 890.600z" fill="url(#wa)" />
      <path d="M709.500 899.800c.8-1 2-1.100 2.600-.1l1.500 3.200c.3.700-.2 1.500-1.300 2.600 1.300 2.700 3.300 4.600 6 5.800 1.200-1.500 1.900-2.200 2.600-1.900l3.300 1.700c.9.500.7 1.800-.2 2.900-1.700 1.900-4.300 2-7.200.7-3.900-1.800-6.500-4.600-8.300-8.300-1.100-2.500-.7-4.900 1-6.600z" fill="#fff" />
      {/* Sublime */}
      <rect x="744" y="888" width="39" height="40" rx="2.500" fill="#4b4a49" />
      <path d="M775.500 892.700v7.800l-14 4.600 14 4.300v8.500l-23.500 5.800v-7.800l14.500-4.500-14.500-4.600v-8.300z" fill="#ff9a0d" />
      <path d="M761.500 905.100l14 4.300v2.500l-8-.700-15-4.800z" fill="#e07f00" opacity=".4" />
      {/* XMind */}
      <rect x="793" y="889.500" width="37" height="37" rx="8" fill="url(#xm)" />
      <path d="M801 896.300l10.500 8.700 10.500-8.700M801 918.800l10.500-8.700 10.500 8.700" fill="none" stroke="#fff" strokeWidth="1.800" strokeLinecap="round" strokeLinejoin="round" />
      {[571.5, 619.5, 667.5, 715.5, 763.5, 811.5].map((cx) => (
        <circle key={cx} cx={cx} cy="934" r="2.100" fill="#0a0f16" />
      ))}
      <path d="M846.500 888v42" stroke="#2d4459" strokeWidth="1.200" />
      {/* Downloads */}
      <path d="M870 886h14l6 5v10h-20z" fill="#f4f4f4" />
      <path d="M877 886h5v8h-5z" fill="#4a545e" />
      <path d="M863 893.500c0-.8.600-1.500 1.500-1.500h9l2 2h21.500c.9 0 1.500.6 1.500 1.500V902H863z" fill="#7fcdf0" />
      <rect x="861" y="896.500" width="38.500" height="25.500" fill="#f5f6f8" />
      <path d="M863 901.500h34M863 905h26M863 909h30" stroke="#cfd3d8" strokeWidth=".8" />
      <path d="M861 920.500h38.500" stroke="#1f2d44" strokeWidth="1.800" />
      {/* Trash */}
      <path d="M912 889h32l-4.500 37c-.3 1.800-1.500 2.500-3 2.500h-17c-1.500 0-2.700-.7-3-2.500z" fill="url(#bin)" />
      <ellipse cx="928" cy="890" rx="16.200" ry="4" fill="#e8e8e8" />
      <path d="M914 890l5-3.500 4 2.500 4-3.500 5 3 5-2.500 5 3.500c-5 4-23 4.500-28 .5z" fill="#8b8f8c" />
      <path d="M918 888l3 2M925 887l2 4M932 888l-2 3M938 888.500l-3 2" stroke="#3f4a45" strokeWidth="1.500" />
      <path d="M920 898l2 9-2 8M934 897l-3 10 3 12M926 904l3 6" stroke="#bdbdbd" strokeWidth=".8" fill="none" />
    </svg>
  );
}

function Desktop() {
  return (
    <div className="relative flex h-[58px] shrink-0 items-end justify-center bg-[#04182d]">
      <svg className="absolute inset-0 h-full w-full">
        <filter id="sea" x="0" y="0" width="100%" height="100%">
          <feTurbulence type="fractalNoise" baseFrequency="0.06 0.35" numOctaves="4" seed="7" />
          <feColorMatrix values="0 0 0 0 0.04  0 0 0 0 0.15  0 0 0 0 0.27  1.600 0.600 0 0 -0.700" colorInterpolationFilters="sRGB" />
        </filter>
        <g transform="rotate(-16 375 29)">
          <rect x="-100" y="-200" width="870" height="460" filter="url(#sea)" />
        </g>
        <g transform="rotate(16 1125 29)">
          <rect x="745" y="-200" width="860" height="460" filter="url(#sea)" />
        </g>
      </svg>
      <div className="relative rounded-t-[5px] bg-[#44607a]">
        <DockIcons />
      </div>
    </div>
  );
}

export default function App() {
  return (
    <div className="flex h-[938px] w-[1500px] flex-col overflow-hidden bg-white font-['Liberation_Sans',sans-serif]">
      <MenuBar />
      <TabStrip />
      <AddressBar />
      <div className="relative flex h-[774px] shrink-0 overflow-hidden">
        <LeftNav />
        <main className="flex w-[1404px] shrink-0 flex-col bg-[#f0f0f1]">
          <PageHeader />
          <SearchRow />
          <LevelTabs />
          <section className="ml-[6px] w-[1391px] grow rounded-t-lg bg-white shadow-[0_0_3px_rgba(0,0,0,0.12)]">
            <Toolbar />
            <AdSetTable />
          </section>
        </main>
        <RightRail />
        {/* Link preview over the bottom edge of the page */}
        <div className={clsx("absolute bottom-0 left-0 h-[22px] w-[1469px] rounded-tr-[4px] border-t border-[#c9ccd0] bg-[#dee1e6] pl-[5px] text-[12.500px] leading-[21px] whitespace-nowrap text-[#3c4043] shadow-[0_-3px_14px_rgba(0,0,0,0.15)]", INTER)}>
          https://business.facebook.com/adsmanager/manage/campaigns?act=790360031548951&amp;business_id=534504827290691&amp;global_scope_id=534504827290691&amp;nav_entry_point=bm_global_nav_shortcut&amp;columns=name%2Cdelivery%2Ccampai...
        </div>
      </div>
      <Desktop />
    </div>
  );
}
